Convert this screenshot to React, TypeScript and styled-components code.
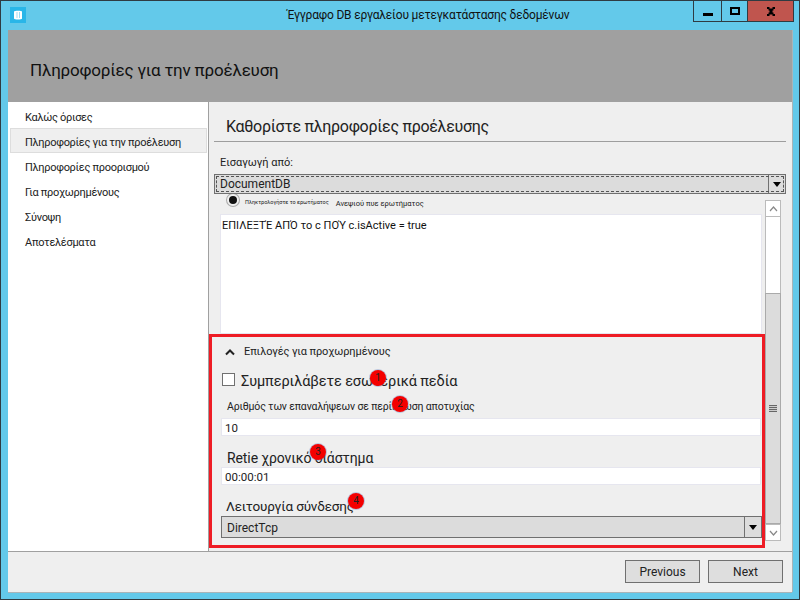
import styled, { createGlobalStyle } from "styled-components";

const navItems = [
  "Καλώς όρισες",
  "Πληροφορίες για την προέλευση",
  "Πληροφορίες προορισμού",
  "Για προχωρημένους",
  "Σύνοψη",
  "Αποτελέσματα",
];

const App = () => {
  return (
    <Window>
      <GlobalStyle />
      <TitleBar>
        <AppIcon>
          <svg width="16" height="16" viewBox="0 0 16 16">
            <rect width="16" height="16" fill="#29b6e8" />
            <path d="M4 4.500C4 3.400 12 3.400 12 4.500V11.500C12 12.800 4 12.800 4 11.500Z" fill="#fff" />
            <path d="M7 5V11M9.500 5V11" stroke="#9fdcf3" strokeWidth="1" />
          </svg>
        </AppIcon>
        <Title>Έγγραφο DB εργαλείου μετεγκατάστασης δεδομένων</Title>
        <Controls>
          <ControlButton>
            <MinGlyph />
          </ControlButton>
          <ControlButton $wide>
            <MaxGlyph />
          </ControlButton>
          <CloseButton>
            <svg width="10" height="9" viewBox="0 0 10 9">
              <path d="M1 0H3.500V1.500H6.500V0H9V2H7.500V3.500H6.500V5.500H7.500V7H9V9H6.500V7.500H3.500V9H1V7H2.500V5.500H3.500V3.500H2.500V2H1Z" fill="#000" />
            </svg>
          </CloseButton>
        </Controls>
      </TitleBar>
      <Client>
        <Banner>Πληροφορίες για την προέλευση</Banner>
        <Body>
          <Sidebar>
            {navItems.map((item, i) => (
              <NavItem key={item} $selected={i === 1}>
                {item}
              </NavItem>
            ))}
          </Sidebar>
          <Main>
            <Heading>Καθορίστε πληροφορίες προέλευσης</Heading>
            <FieldLabel>Εισαγωγή από:</FieldLabel>
            <SourceSelect>
              <SelectText>DocumentDB</SelectText>
              <SelectArrow>
                <ArrowGlyph />
              </SelectArrow>
            </SourceSelect>
            <ScrollArea>
              <ScrollContent>
                <QueryTabs>
                  <RadioDot />
                  <TinyText>Πληκτρολογήστε το ερωτήματος</TinyText>
                  <SmallText>Ανεψιού πυε ερωτήματος</SmallText>
                </QueryTabs>
                <QueryBox>ΕΠΙΛΕΞΤΈ ΑΠΌ το c ΠΟΎ c.isActive = true</QueryBox>
                <Advanced>
                  <AdvancedHeader>
                    <svg width="10" height="7" viewBox="0 0 10 7">
                      <path d="M1 5.500L5 1.500L9 5.500" fill="none" stroke="#222" strokeWidth="2" />
                    </svg>
                    Επιλογές για προχωρημένους
                  </AdvancedHeader>
                  <CheckRow>
                    <CheckBox />
                    <BigLabel>
                      Συμπεριλάβετε εσωτερικά πεδία
                      <Marker $left={129} $top={-2}>1</Marker>
                    </BigLabel>
                  </CheckRow>
                  <RetryLabel>
                    Αριθμός των επαναλήψεων σε περίπτωση αποτυχίας
                    <Marker $left={165} $top={-3}>2</Marker>
                  </RetryLabel>
                  <FirstInput>10</FirstInput>
                  <IntervalLabel>
                    Retie χρονικό διάστημα
                    <Marker $left={83} $top={-5}>3</Marker>
                  </IntervalLabel>
                  <TextInput>00:00:01</TextInput>
                  <ModeLabel>
                    Λειτουργία σύνδεσης
                    <Marker $left={122} $top={-4}>4</Marker>
                  </ModeLabel>
                  <ModeSelect>
                    <ModeText>DirectTcp</ModeText>
                    <SelectArrow>
                      <ArrowGlyph />
                    </SelectArrow>
                  </ModeSelect>
                </Advanced>
              </ScrollContent>
              <ScrollBar>
                <ScrollButton>
                  <svg width="9" height="6" viewBox="0 0 9 6">
                    <path d="M1 5L4.500 1L8 5" fill="none" stroke="#888" strokeWidth="1.200" />
                  </svg>
                </ScrollButton>
                <ScrollTrack />
                <ScrollThumb>
                  <Grip />
                </ScrollThumb>
                <ScrollButton>
                  <svg width="9" height="6" viewBox="0 0 9 6">
                    <path d="M1 1L4.500 5L8 1" fill="none" stroke="#888" strokeWidth="1.200" />
                  </svg>
                </ScrollButton>
              </ScrollBar>
            </ScrollArea>
          </Main>
        </Body>
        <Footer>
          <FooterButton>Previous</FooterButton>
          <FooterButton>Next</FooterButton>
        </Footer>
      </Client>
    </Window>
  );
};

export default App;

const GlobalStyle = createGlobalStyle`
  html, body {
    margin: 0;
    padding: 0;
    overflow: hidden;
  }
  body {
    font-family: Roboto, "Noto Sans", sans-serif;
    color: #111;
  }
`;

const Window = styled.div`
  width: 800px;
  height: 600px;
  box-sizing: border-box;
  background: #63c9ea;
  border: 1px solid #2f3b42;
  display: flex;
  flex-direction: column;
`;

const TitleBar = styled.div`
  height: 29px;
  flex-shrink: 0;
  display: flex;
  align-items: flex-start;
  position: relative;
`;

const AppIcon = styled.div`
  width: 16px;
  height: 16px;
  margin: 6px 0 0 9px;
`;

const Title = styled.div`
  position: absolute;
  left: 286px;
  top: 5px;
  font-size: 12px;
  letter-spacing: -0.2px;
  line-height: 18px;
  color: #111;
`;

const Controls = styled.div`
  margin-left: auto;
  margin-right: 5px;
  display: flex;
  height: 21px;
  border: 1px solid #2f3b42;
  border-top: none;
  box-sizing: border-box;
`;

const ControlButton = styled.div<{ $wide?: boolean }>`
  width: ${(p) => (p.$wide ? 26 : 28)}px;
  display: flex;
  align-items: center;
  justify-content: center;
  border-right: 1px solid #2f3b42;
  box-sizing: border-box;
`;

const MinGlyph = styled.div`
  width: 10px;
  height: 3px;
  background: #000;
  margin-top: 6px;
`;

const MaxGlyph = styled.div`
  width: 10px;
  height: 8px;
  box-sizing: border-box;
  border: 2px solid #000;
`;

const CloseButton = styled.div`
  width: 45px;
  background: #c0554e;
  display: flex;
  align-items: center;
  justify-content: center;
`;

const Client = styled.div`
  flex: 1;
  margin: 0 7px 7px 7px;
  background: #efefef;
  display: flex;
  flex-direction: column;
  min-height: 0;
  box-shadow: 0 1px 0 #a9b4b8, 1px 0 0 #a9b4b8;
`;

const Banner = styled.div`
  height: 72px;
  flex-shrink: 0;
  box-sizing: border-box;
  background: #a0a0a0;
  padding: 28px 0 0 22px;
  font-size: 17px;
  letter-spacing: -0.2px;
  line-height: 24px;
  color: #111;
`;

const Body = styled.div`
  flex: 1;
  display: flex;
  min-height: 0;
`;

const Sidebar = styled.div`
  width: 201px;
  flex-shrink: 0;
  box-sizing: border-box;
  background: #fff;
  padding: 1px 0 0 2px;
  border-right: 1px solid #a0a0a0;
`;

const NavItem = styled.div<{ $selected?: boolean }>`
  width: 197px;
  height: 25px;
  box-sizing: border-box;
  padding: 2px 0 0 14px;
  font-size: 11px;
  letter-spacing: -0.3px;
  line-height: 24px;
  color: #222;
  border: 1px solid ${(p) => (p.$selected ? "#ddd" : "transparent")};
  background: ${(p) => (p.$selected ? "#efefef" : "transparent")};
`;

const Main = styled.div`
  flex: 1;
  min-width: 0;
  display: flex;
  flex-direction: column;
  overflow: hidden;
`;

const Heading = styled.div`
  margin: 0 0 0 5px;
  width: 572px;
  height: 40px;
  flex-shrink: 0;
  box-sizing: border-box;
  padding: 13px 0 0 12px;
  font-size: 16px;
  letter-spacing: -0.3px;
  line-height: 24px;
  border-bottom: 1px solid #9e9e9e;
  color: #222;
`;

const FieldLabel = styled.div`
  margin: 13px 0 0 11px;
  font-size: 11px;
  line-height: 16px;
  color: #222;
`;

const SourceSelect = styled.div`
  flex-shrink: 0;
  margin: 3px 0 0 5px;
  width: 572px;
  height: 20px;
  box-sizing: border-box;
  border: 1px solid #707070;
  background: #dcdcdc;
  display: flex;
  position: relative;
  z-index: 1;

  &::after {
    content: "";
    position: absolute;
    inset: 1px;
    border: 1px dashed #555;
    pointer-events: none;
  }
`;

const SelectText = styled.div`
  flex: 1;
  font-size: 12px;
  line-height: 16px;
  padding: 1px 0 0 5px;
  color: #222;
`;

const ModeText = styled(SelectText)`
  padding: 3px 0 0 5px;
`;

const SelectArrow = styled.div`
  width: 17px;
  box-sizing: border-box;
  border-left: 1px solid #707070;
  display: flex;
  align-items: center;
  justify-content: center;
`;

const ArrowGlyph = styled.div`
  width: 0;
  height: 0;
  border-left: 4px solid transparent;
  border-right: 4px solid transparent;
  border-top: 5px solid #000;
`;

const ScrollArea = styled.div`
  flex: 1;
  min-height: 0;
  display: flex;
`;

const ScrollContent = styled.div`
  width: 556px;
  flex-shrink: 0;
  display: flex;
  flex-direction: column;
`;

const QueryTabs = styled.div`
  height: 20px;
  flex-shrink: 0;
  padding-left: 18px;
  display: flex;
  align-items: flex-start;
  overflow: hidden;
`;

const RadioDot = styled.div`
  width: 8px;
  height: 8px;
  flex-shrink: 0;
  border-radius: 50%;
  background: #111;
  border: 2px solid #efefef;
  box-shadow: 0 0 0 1px #aaa;
`;

const TinyText = styled.span`
  font-size: 5.500px;
  line-height: 10px;
  white-space: nowrap;
  color: #222;
  margin: 3px 0 0 6px;
`;

const SmallText = styled.span`
  font-size: 7.500px;
  line-height: 12px;
  white-space: nowrap;
  color: #222;
  margin: 4px 0 0 7px;
`;

const QueryBox = styled.div`
  margin-left: 11px;
  width: 542px;
  height: 120px;
  flex-shrink: 0;
  box-sizing: border-box;
  background: #fff;
  border: 1px solid #e6e6ef;
  padding: 3px 0 0 1px;
  font-size: 11px;
  line-height: 16px;
  color: #111;
`;

const Advanced = styled.div`
  width: 556px;
  height: 214px;
  flex-shrink: 0;
  box-sizing: border-box;
  border: 3px solid #ee1c25;
  display: flex;
  flex-direction: column;
  align-items: flex-start;
`;

const AdvancedHeader = styled.div`
  display: flex;
  align-items: center;
  gap: 9px;
  margin: 7px 0 0 13px;
  font-size: 11px;
  letter-spacing: -0.1px;
  line-height: 16px;
  color: #222;
`;

const CheckRow = styled.div`
  display: flex;
  align-items: flex-start;
  gap: 6px;
  margin: 12px 0 0 10px;
`;

const CheckBox = styled.div`
  width: 13px;
  height: 13px;
  margin-top: 1px;
  box-sizing: border-box;
  border: 1px solid #707070;
  background: #fff;
`;

const BigLabel = styled.div`
  position: relative;
  font-size: 14.500px;
  letter-spacing: -0.1px;
  line-height: 20px;
  color: #222;
`;

const RetryLabel = styled(BigLabel)`
  font-size: 10.500px;
  letter-spacing: -0.15px;
  line-height: 16px;
  margin: 7px 0 0 15px;
`;

const IntervalLabel = styled(BigLabel)`
  font-size: 14px;
  letter-spacing: -0.1px;
  line-height: 18px;
  margin: 13px 0 0 15px;
`;

const ModeLabel = styled(BigLabel)`
  font-size: 13.500px;
  letter-spacing: -0.15px;
  line-height: 18px;
  margin: 12px 0 0 14px;
`;

const TextInput = styled.div`
  width: 540px;
  height: 18px;
  margin-left: 9px;
  flex-shrink: 0;
  box-sizing: border-box;
  background: #fff;
  border: 1px solid #e6e6ef;
  font-size: 11.500px;
  line-height: 16px;
  padding: 1px 0 0 3px;
  color: #222;
`;

const FirstInput = styled(TextInput)`
  margin-top: 3px;
`;

const ModeSelect = styled.div`
  width: 541px;
  height: 22px;
  margin: 1px 0 0 9px;
  flex-shrink: 0;
  box-sizing: border-box;
  border: 1px solid #707070;
  background: #dcdcdc;
  display: flex;
`;

const Marker = styled.span<{ $left: number; $top: number }>`
  position: absolute;
  left: ${(p) => p.$left}px;
  top: ${(p) => p.$top}px;
  width: 16px;
  height: 16px;
  border-radius: 50%;
  background: #f40000;
  box-shadow: 0 0 0 1px rgba(90, 120, 190, 0.35);
  text-align: center;
  font-size: 10px;
  letter-spacing: 0;
  line-height: 16px;
  color: #222;
`;

const ScrollBar = styled.div`
  width: 16px;
  margin: 6px 0 10px 0;
  flex-shrink: 0;
  display: flex;
  flex-direction: column;
`;

const ScrollButton = styled.div`
  height: 17px;
  flex-shrink: 0;
  box-sizing: border-box;
  background: #fff;
  border: 1px solid #bbb;
  display: flex;
  align-items: center;
  justify-content: center;
`;

const ScrollTrack = styled.div`
  height: 76px;
  flex-shrink: 0;
  background: #fff;
  border-left: 1px solid #bbb;
  border-right: 1px solid #bbb;
`;

const ScrollThumb = styled.div`
  flex: 1;
  box-sizing: border-box;
  background: #dcdcdc;
  border: 1px solid #aaa;
  display: flex;
  align-items: center;
  justify-content: center;
`;

const Grip = styled.div`
  width: 8px;
  height: 7px;
  background: repeating-linear-gradient(#666 0 1px, #ccc 1px 2px);
`;

const Footer = styled.div`
  height: 41px;
  flex-shrink: 0;
  box-sizing: border-box;
  border-top: 1px solid #a0a0a0;
  display: flex;
  justify-content: flex-end;
  gap: 8px;
  padding: 8px 9px 0 0;
`;

const FooterButton = styled.div`
  width: 75px;
  height: 23px;
  box-sizing: border-box;
  border: 1px solid #707070;
  background: #dedede;
  text-align: center;
  font-size: 12px;
  line-height: 22px;
  color: #222;
`;
